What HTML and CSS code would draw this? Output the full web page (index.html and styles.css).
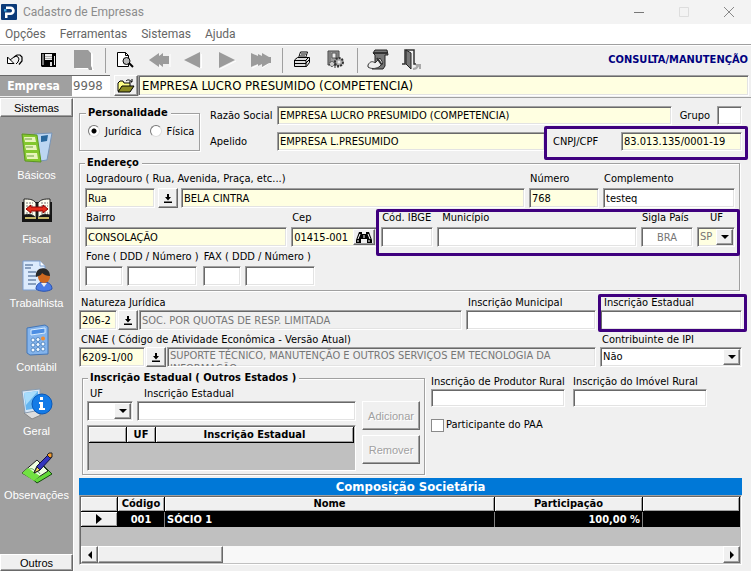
FILE: index.html
```html
<!DOCTYPE html>
<html lang="pt-BR">
<head>
<meta charset="utf-8">
<title>Cadastro de Empresas</title>
<link rel="stylesheet" href="styles.css">
</head>
<body>
<svg class="defs" aria-hidden="true">
  <symbol id="drop" viewBox="0 0 8 4"><path d="M0 0h8L4 4z"/></symbol>
  <symbol id="pick" viewBox="0 0 8 9"><path d="M3 0h2v3h2L4 6.500 1 3h2zM0 7.500h8V9H0z"/></symbol>
</svg>
<div class="window">
  <header class="titlebar">
    <svg class="logo" viewBox="0 0 16 16"><rect width="16" height="16" rx="1" fill="#0b3a78"/><path d="M5 2.500h4.500a4.250 4.250 0 0 1 0 8.500H6.500v3H4V8.500h5.300a1.700 1.700 0 0 0 0-3.500H5z" fill="#fff"/><path d="M3 5h2.500v2.500H3z" fill="#3da5e0"/></svg>
    <h1>Cadastro de Empresas</h1>
    <div class="window-buttons">
      <button aria-label="Minimizar"><svg viewBox="0 0 12 12"><path d="M1 6.500h10" stroke="#777"/></svg></button>
      <button aria-label="Maximizar" disabled><svg viewBox="0 0 12 12"><path d="M1.500 1.500h9v9h-9z" stroke="#ddd"/></svg></button>
      <button aria-label="Fechar"><svg viewBox="0 0 12 12"><path d="M1 1l10 10M11 1L1 11" stroke="#888"/></svg></button>
    </div>
  </header>
  <nav class="menubar">
    <a href="#">Opções</a><a href="#">Ferramentas</a><a href="#">Sistemas</a><a href="#">Ajuda</a>
  </nav>
  <div class="toolbar">
    <button aria-label="Desfazer"><svg viewBox="0 0 22 22"><path d="M1.500 8v6.500H8z" fill="#fff" stroke="#000"/><path d="M4 11l4-3 2-1 2 1 1 2-1 3-2 2" fill="none" stroke="#000"/><path d="M8 8l3-2h3l2 2v4l-3 3.500" fill="none" stroke="#000" stroke-width="1.200"/></svg></button>
    <button aria-label="Salvar"><svg viewBox="0 0 22 22"><path d="M1 4h15v14H2l-1-1z" fill="#000"/><path d="M2.500 5h1v11h-1zM5 5h7v6H5zM14 7h1v9h-1z" fill="#eee"/><path d="M5 7.500h7M5 9.500h7" stroke="#aaa"/><path d="M10 13h2v4h-2z" fill="#ddd"/></svg></button>
    <button aria-label="Novo" disabled><svg viewBox="0 0 22 22"><path d="M2 2h14l3 3v15h1v1h-4l-1-1H2z" fill="#fff"/><path d="M0 1h14l3 3v13l1 2v2h-3l-1-2H0z" fill="#9b9b9b"/></svg></button>
    <i class="separator"></i>
    <button aria-label="Pesquisar"><svg viewBox="0 0 22 22"><path d="M2.500 3.500h8l3 3v11h-11z" fill="#fff" stroke="#000"/><path d="M10.500 3.500v3h3" fill="none" stroke="#000"/><circle cx="11.500" cy="12" r="3.500" fill="#bbb" stroke="#000"/><path d="M14 14l4 4" stroke="#000" stroke-width="2"/></svg></button>
    <button aria-label="Primeiro" disabled><svg viewBox="0 0 22 22"><path d="M11 5v14M21 5v13" stroke="#fff"/><path d="M0 11l10-7v3l4-3v3h6v8h-6v3l-4-3v3z" fill="#9b9b9b"/></svg></button>
    <button aria-label="Anterior" disabled><svg viewBox="0 0 22 22"><path d="M18.500 5v14l-3-1" stroke="#fff" fill="none"/><path d="M1 11l16-8v16z" fill="#9b9b9b"/></svg></button>
    <button aria-label="Próximo" disabled><svg viewBox="0 0 22 22"><path d="M3 20l16-8" stroke="#fff"/><path d="M18 11L2 3v16z" fill="#9b9b9b"/></svg></button>
    <button aria-label="Último" disabled><svg viewBox="0 0 22 22"><path d="M1 19l8-4M11 19l6-4" stroke="#fff"/><path d="M20 8v6h-2l-7 4v-3l-4 2v-2l-7 3V4l7 3V5l4 2V4l7 4z" fill="#9b9b9b"/></svg></button>
    <i class="separator"></i>
    <button aria-label="Imprimir"><svg viewBox="0 0 22 22"><path d="M6.500 9l2-6h7l-2 6z" fill="#fff" stroke="#000"/><path d="M9 5h5M8 7h5" stroke="#000"/><path d="M2.500 11l3-2.500h12v5l-3 4h-12z" fill="#ddd" stroke="#000"/><path d="M2 11.500h12v6M2 14.500h12M14 11l3-3M14 14l3-3" stroke="#000" fill="none"/></svg></button>
    <button aria-label="Configurar"><svg viewBox="0 0 22 22"><path d="M2 2h11v14H2z" fill="#999" stroke="#444"/><path d="M6 4h4v5H6z" fill="#eee" stroke="#555"/><path d="M11 3v9M4 3v12" stroke="#666"/><circle cx="13" cy="13" r="4" fill="#aaa" stroke="#333" stroke-width="2" stroke-dasharray="2 1"/><circle cx="6" cy="15" r="2.500" fill="#ccc" stroke="#333" stroke-dasharray="2 1"/><path d="M9 12v7M12 16v3" stroke="#333"/><circle cx="13" cy="13" r="1.500" fill="#eee"/></svg></button>
    <i class="separator"></i>
    <button aria-label="Relatórios"><svg viewBox="0 0 22 22"><path d="M6 4l2-3h12l1 5h-3v11l-2 3H5l3-3V6z" fill="#777" stroke="#222"/><path d="M7 4h13" stroke="#333" stroke-width="2"/><path d="M1 16c2-4 5-4 7-2l5-5 3 5-4 4c-4 2-8 2-11 0z" fill="#eee" stroke="#333"/><path d="M10 9l5 7" stroke="#333" stroke-width="2"/></svg></button>
    <button aria-label="Sair"><svg viewBox="0 0 22 22"><path d="M1 15h3V1h9v14h2" fill="none" stroke="#333" stroke-width="1.500"/><path d="M5 1l5 3v16l-5-5z" fill="#777" stroke="#222"/><path d="M12 20c3 0 4-1 5-3l-2-1h4v4" fill="none" stroke="#aaa" stroke-width="2"/></svg></button>
    <strong class="mode">CONSULTA/MANUTENÇÃO</strong>
  </div>
  <div class="company">
    <label for="empresa">Empresa</label>
    <input id="empresa" class="code" value="9998">
    <button class="raised" aria-label="Abrir empresa"><svg viewBox="0 0 18 14"><path d="M1 12V4l2-2h3l1 2h6v8z" fill="#ff8" stroke="#000"/><path d="M1 13l4-6h12l-4 6z" fill="#8a8a22" stroke="#000"/><path d="M9 2c2-2 4-1 6 1m0-3v3h-3" fill="none" stroke="#000"/></svg></button>
    <input class="field yellow name" aria-label="Nome da empresa" value="EMPRESA LUCRO PRESUMIDO (COMPETENCIA)">
  </div>
  <div class="body">
    <aside class="sidebar">
      <button class="raised tab">Sistemas</button>
      <nav>
        <a href="#"><svg viewBox="0 0 32 32"><path d="M13 2l18-1-5 27-14 2z" fill="#bcd6f2" stroke="#7794b8"/><path d="M20 4l7-1-1 6-6 1z" fill="#27679d"/><path d="M1 2l15 1 4 27-16-1z" fill="#83c72d" stroke="#5d9621"/><path d="M3 5h11l1 5H4zM4 13h11l1 5H5zM5 21h11l1 6H6z" fill="#e8f5ba"/><path d="M4 7h7M5 15h7M6 24h7" stroke="#6f9a48"/></svg>Básicos</a>
        <a href="#"><svg viewBox="0 0 32 32"><path d="M1 6h30v20H1z" fill="#151515"/><path d="M3 3c5 0 9 0 12 4v15c-3-4-7-4-12-3zM29 3c-5 0-9 0-12 4v15c3-4 7-4 12-3z" fill="#fffff0" stroke="#222"/><path d="M4 22h11M17 22h11" stroke="#c6b868" stroke-width="2"/><path d="M5 7h7M5 10h7M20 7h7M20 10h7M5 17h7M20 17h7" stroke="#777" stroke-dasharray="2 1"/><path d="M5 13l5-4v2h12V9l5 4-5 4v-2H10v2z" fill="#e62d1b" stroke="#8b0000"/></svg>Fiscal</a>
        <a href="#"><svg viewBox="0 0 32 32"><path d="M2 1h17l5 5v24H2z" fill="#dcebfd" stroke="#7d9fd0"/><path d="M19 1v5h5" fill="#fff" stroke="#7d9fd0"/><path d="M4 5h8M4 8h6M7 12h8M7 16h8M7 20h8M7 24h8" stroke="#345581"/><path d="M15 29c0-5 4-7 8-7s8 2 8 7c-4 3-12 3-16 0z" fill="#4b7ce5" stroke="#2851b0"/><circle cx="23" cy="17" r="6" fill="#cf681f"/><path d="M15 17c-2-11 14-12 14-1-3 0-6-1-8-3-1 3-4 3-6 4z" fill="#292929"/><path d="M20 23l3 4 3-4" fill="#eee"/></svg>Trabalhista</a>
        <a href="#"><svg viewBox="0 0 32 32"><path d="M6 4l18-3 3 2v27L9 31l-3-2z" fill="#84b4ec" stroke="#4376b7"/><path d="M10 6l14-2v5l-14 2z" fill="#4d8ee3" stroke="#d9edff"/><g fill="#f4faff" stroke="#5489c4"><circle cx="12" cy="16" r="2"/><circle cx="17" cy="15.500" r="2"/><circle cx="12" cy="21" r="2"/><circle cx="17" cy="20.500" r="2"/><circle cx="22" cy="20" r="2"/><circle cx="12" cy="26" r="2"/><circle cx="17" cy="25.500" r="2"/><circle cx="22" cy="25" r="2"/></g><circle cx="22" cy="14.500" r="2" fill="#f08b30"/></svg>Contábil</a>
        <a href="#"><svg viewBox="0 0 32 32"><path d="M3 25l9-3 8 5-9 4z" fill="#ddd" stroke="#888"/><path d="M1 3l18-2v21L4 25z" fill="#d6e6f7" stroke="#899cb0"/><path d="M3 5l14-2v17L5 22z" fill="#63b4f0"/><path d="M3 5l14-2-12 14z" fill="#a7dcfc"/><circle cx="21" cy="16" r="10" fill="#147be7" stroke="#0758bb"/><path d="M19 14h3v6h2v2h-6v-2h1v-4h-1v-2zM19 9h3v3h-3z" fill="#fff"/></svg>Geral</a>
        <a href="#"><svg viewBox="0 0 32 32"><path d="M7 23l15-10 9 9-15 9z" fill="#62d838" stroke="#174b10"/><path d="M1 21L16 8l11 11-14 9z" fill="#efffe0" stroke="#222"/><path d="M5 20c3-4 6-4 8-2s5 1 6 4" fill="none" stroke="#50a050"/><path d="M1 21l6-5 12 8-6 5z" fill="#71e142"/><path d="M13 21l3-7L28 2l3 3-12 13z" fill="#3436bd" stroke="#101045"/><path d="M13 21l3-6 3 3z" fill="#f4d85a" stroke="#222"/><path d="M26 3l2-2h3v4l-2 1z" fill="#f39b2d" stroke="#222"/></svg>Observações</a>
      </nav>
      <button class="raised tab">Outros</button>
    </aside>
    <main>
      <div class="identity">
        <fieldset class="kind">
          <legend>Personalidade</legend>
          <label><input type="radio" name="tipo" checked>Jurídica</label>
          <label><input type="radio" name="tipo">Física</label>
        </fieldset>
        <div class="names">
          <div class="line">
            <label class="lead" for="razao">Razão Social</label>
            <input id="razao" class="field yellow grow" value="EMPRESA LUCRO PRESUMIDO (COMPETENCIA)">
            <label class="group-label" for="grupo">Grupo</label>
            <input id="grupo" class="field group">
          </div>
          <div class="line">
            <label class="lead" for="apelido">Apelido</label>
            <input id="apelido" class="field yellow grow" value="EMPRESA L.PRESUMIDO">
            <div class="line tax marked">
              <label for="cnpj">CNPJ/CPF</label>
              <input id="cnpj" class="field yellow grow" value="83.013.135/0001-19">
            </div>
          </div>
        </div>
      </div>

      <fieldset class="address">
        <legend>Endereço</legend>
        <div class="row">
          <div class="cell grow">
            <label for="tipo-log">Logradouro ( Rua, Avenida, Praça, etc...)</label>
            <div class="line street">
              <input id="tipo-log" class="field yellow w70" value="Rua">
              <button class="raised pick" aria-label="Escolher logradouro"><svg><use href="#pick"/></svg></button>
              <input class="field yellow grow" aria-label="Logradouro" value="BELA CINTRA">
            </div>
          </div>
          <div class="cell w70"><label for="numero">Número</label><input id="numero" class="field yellow" value="768"></div>
          <div class="cell w132"><label for="compl">Complemento</label><input id="compl" class="field" value="testeq"></div>
        </div>
        <div class="row">
          <div class="cell grow"><label for="bairro">Bairro</label><input id="bairro" class="field yellow" value="CONSOLAÇÃO"></div>
          <div class="cell w86"><label for="cep">Cep</label>
            <div class="combo"><input id="cep" class="field yellow" value="01415-001"><button class="raised find" aria-label="Buscar CEP"><svg viewBox="0 0 16 12"><path d="M3 1h3v2h4V1h3l3 8v3h-5V8H5v4H0V9z"/><path d="M4 3L2 8M12 3l2 5M8 4v3M2 9v2M13 9v2" stroke="#fff"/></svg></button></div>
          </div>
          <div class="row city grow marked">
            <div class="cell w52"><label for="ibge">Cód. IBGE</label><input id="ibge" class="field"></div>
            <div class="cell grow"><label class="indent" for="municipio">Município</label><input id="municipio" class="field"></div>
            <div class="cell w52"><label for="pais">Sigla País</label><input id="pais" class="field center" value="BRA" disabled></div>
            <div class="cell w38"><label class="center" for="uf">UF</label>
              <div class="combo"><select id="uf" class="field yellow" disabled><option>SP</option></select><span class="raised arrow"><svg><use href="#drop"/></svg></span></div>
            </div>
          </div>
        </div>
        <div class="row">
          <div class="cell"><label for="ddd">Fone ( DDD / Número )</label><div class="line phone"><input id="ddd" class="field w38"><input class="field w70" aria-label="Número do telefone"></div></div>
          <div class="cell"><label for="fax">FAX ( DDD / Número )</label><div class="line phone"><input id="fax" class="field w38"><input class="field w70" aria-label="Número do fax"></div></div>
        </div>
      </fieldset>

      <div class="registry">
        <div class="cell"><label for="natureza">Natureza Jurídica</label>
          <div class="line"><input id="natureza" class="field yellow w38" value="206-2"><button class="raised pick" aria-label="Escolher natureza"><svg><use href="#pick"/></svg></button><input class="field grow" aria-label="Descrição da natureza" value="SOC. POR QUOTAS DE RESP. LIMITADA" disabled></div>
        </div>
        <div class="cell"><label for="insc-mun">Inscrição Municipal</label><input id="insc-mun" class="field"></div>
        <div class="cell marked state"><label for="insc-est">Inscrição Estadual</label><input id="insc-est" class="field"></div>
        <div class="cell wide"><label for="cnae">CNAE ( Código de Atividade Econômica - Versão Atual)</label>
          <div class="line"><input id="cnae" class="field yellow w66" value="6209-1/00"><button class="raised pick" aria-label="Escolher CNAE"><svg><use href="#pick"/></svg></button><textarea class="field grow" aria-label="Descrição do CNAE" disabled>SUPORTE TÉCNICO, MANUTENÇÃO E OUTROS SERVIÇOS EM TECNOLOGIA DA INFORMAÇÃO</textarea></div>
        </div>
        <div class="cell"><label for="ipi">Contribuinte de IPI</label>
          <div class="combo"><select id="ipi" class="field"><option>Não</option><option>Sim</option></select><span class="raised arrow"><svg><use href="#drop"/></svg></span></div>
        </div>
      </div>

      <div class="extras">
        <fieldset class="others">
          <legend>Inscrição Estadual ( Outros Estados )</legend>
          <div class="others-form">
            <div class="row">
              <div class="cell w46"><label for="uf2">UF</label><div class="combo"><select id="uf2" class="field"><option></option><option>SP</option></select><span class="raised arrow"><svg><use href="#drop"/></svg></span></div></div>
              <div class="cell grow"><label class="indent" for="insc2">Inscrição Estadual</label><input id="insc2" class="field"></div>
            </div>
            <div class="grid small">
              <table><colgroup><col class="c38"><col class="c28"><col></colgroup><thead><tr><th></th><th>UF</th><th>Inscrição Estadual</th></tr></thead></table>
            </div>
          </div>
          <div class="actions"><button class="raised" disabled>Adicionar</button><button class="raised" disabled>Remover</button></div>
        </fieldset>
        <div class="rural">
          <div class="row">
            <div class="cell w134"><label for="produtor">Inscrição de Produtor Rural</label><input id="produtor" class="field"></div>
            <div class="cell w134"><label for="imovel">Inscrição do Imóvel Rural</label><input id="imovel" class="field"></div>
          </div>
          <label class="check"><input type="checkbox">Participante do PAA</label>
        </div>
      </div>

      <section class="partners">
        <h2>Composição Societária</h2>
        <div class="grid">
          <table>
            <colgroup><col class="c36"><col class="c47"><col><col class="c148"><col class="c96"></colgroup>
            <thead><tr><th></th><th>Código</th><th>Nome</th><th>Participação</th><th></th></tr></thead>
            <tbody><tr><th><svg class="marker" viewBox="0 0 6 10"><path d="M0 0l6 5-6 5z"/></svg></th><td class="center">001</td><td>SÓCIO 1</td><td class="number">100,00 %</td><td></td></tr></tbody>
          </table>
          <div class="scroll"><button class="raised" aria-label="Rolar à esquerda"><svg viewBox="0 0 4 8"><path d="M4 0v8L0 4z"/></svg></button><span class="raised thumb"></span><button class="raised" aria-label="Rolar à direita"><svg viewBox="0 0 4 8"><path d="M0 0v8l4-4z"/></svg></button></div>
        </div>
      </section>
    </main>
  </div>
</div>
</body>
</html>
```
FILE: styles.css
```css
* { box-sizing: border-box; }
body {
  margin: 0;
  background: #f0f0f0;
  color: #000;
  font: 11px/14px "DejaVu Sans Condensed", "Noto Sans", sans-serif;
}
button, input, select, textarea { margin: 0; padding: 0; font: inherit; color: inherit; border-radius: 0; }
button { background: none; border: 0; display: flex; align-items: center; justify-content: center; }
a { color: inherit; text-decoration: none; }
svg { display: block; fill: none; }
.defs { position: absolute; width: 0; height: 0; }
.window { min-height: 100vh; display: flex; flex-direction: column; }

.titlebar { display: flex; align-items: center; height: 24px; gap: 6px; padding-left: 1px; background: #f3f3f3; }
.logo { width: 16px; height: 16px; }
h1 { margin: 0; font: 12px/16px Roboto, sans-serif; color: #8c8c8c; }
.window-buttons { display: flex; margin-left: auto; }
.window-buttons button { width: 45px; height: 24px; }
.window-buttons svg { width: 12px; height: 12px; }
.menubar { display: flex; gap: 14px; height: 20px; padding-left: 5px; background: #fff; color: #666; font: 12px/20px Roboto, sans-serif; }

.toolbar { display: flex; align-items: center; height: 31px; border-top: 1px solid #a0a0a0; box-shadow: inset 0 1px #fff; }
.toolbar button { width: 34px; height: 28px; }
.toolbar svg { width: 22px; height: 22px; }
.separator { width: 7px; height: 25px; border-left: 3px solid #f0f0f0; border-right: 3px solid #f0f0f0; background: #a0a0a0; }
.mode { margin-left: auto; padding-right: 3px; color: #000080; }

.company { display: flex; height: 23px; padding: 0 2px 1px 0; border-bottom: 1px solid #a0a0a0; }
.company label { width: 72px; padding-top: 1px; padding-right: 5px; border-top: 1px solid #696969; background: #a0a0a0; color: #fff; font-size: 12px; font-weight: bold; line-height: 18px; text-align: center; }
.company .code { width: 38px; padding-left: 1px; border: 0; border-top: 1px solid #696969; background: #fff; color: #666; font-size: 13px; }
.company button { width: 24px; margin-left: 4px; }
.company button svg { width: 18px; height: 14px; }
.company .name { flex: 1; height: auto; padding: 0 3px; font-size: 13px; }

.field {
  width: 100%;
  min-width: 0;
  height: 20px;
  padding: 0 2px;
  background: #fff;
  border: 1px solid;
  border-color: #a0a0a0 #fff #fff #a0a0a0;
  box-shadow: inset 1px 1px #696969, inset -1px -1px #e3e3e3;
}
.field:disabled { color: #767676; opacity: 1; background: #f0f0f0; }
.field.center:disabled { background: #fff; }
.field.yellow, .field.yellow:disabled { background: #ffffe1; }
select.field { appearance: none; }
textarea.field { padding: 1px 2px 0; resize: none; overflow: hidden; line-height: 13px; display: block; }
.raised {
  background: #f0f0f0;
  border: 1px solid;
  border-color: #fff #696969 #696969 #fff;
  box-shadow: inset -1px -1px #a0a0a0;
}
.combo { position: relative; }
.combo .arrow, .combo .find { position: absolute; top: 2px; right: 2px; bottom: 2px; width: 17px; display: flex; align-items: center; justify-content: center; pointer-events: none; }
.combo .find { width: 22px; pointer-events: auto; }
.find svg { width: 16px; height: 12px; fill: #000; }
.arrow svg { width: 8px; height: 4px; fill: #000; }
.pick { flex: none; width: 20px; height: 20px; }
.pick svg { width: 8px; height: 9px; fill: #000; }

.body { flex: 1; display: flex; }
.sidebar { flex: none; width: 74px; display: flex; flex-direction: column; border-right: 1px solid #fff; background: #a0a0a0; font: 11px/14px "Liberation Sans", sans-serif; color: #fff; }
.tab { height: 19px; color: #000; }
.tab:last-child { height: 17px; }
.sidebar nav { flex: 1; display: flex; flex-direction: column; gap: 14px; padding-top: 15px; }
.sidebar a { display: flex; flex-direction: column; align-items: center; gap: 4px; }
.sidebar svg { width: 32px; height: 32px; }

main { flex: 1; min-width: 0; padding: 8px 9px 4px 5px; }
fieldset { min-width: 0; margin: 0; border: 1px solid #a0a0a0; box-shadow: 1px 1px #fff, inset 1px 1px #fff; }
legend { padding: 0 3px 0 2px; background: #f0f0f0; font-weight: bold; line-height: 14px; }
.line, .row { display: flex; }
.line { align-items: center; }
.row { gap: 4px; }
.cell { min-width: 0; }
.cell > label { display: block; white-space: nowrap; }
.grow { flex: 1; min-width: 0; }
.center { text-align: center; }
.w38 { flex: none; width: 38px; }
.w46 { flex: none; width: 46px; }
.w52 { flex: none; width: 52px; }
.w66 { flex: none; width: 66px; }
.w70 { flex: none; width: 70px; }
.w86 { flex: none; width: 86px; }
.w132 { flex: none; width: 132px; }
.w134 { flex: none; width: 134px; }

.marked { position: relative; }
.marked::after { content: ""; position: absolute; inset: -6px -6px -9px -9px; border: 3px solid #3f007f; border-radius: 2px; pointer-events: none; }
.city.marked::after { inset: 0 -5px -9px -5px; }
.state.marked::after { inset: -2px -5px -2px -2px; }

.identity { display: flex; gap: 10px; }
.kind { align-self: flex-end; display: flex; gap: 8px; width: 121px; height: 45px; padding: 5px 0 0 8px; }
.kind legend { margin-left: -2px; }
.kind label { display: flex; align-items: flex-start; gap: 5px; white-space: nowrap; }
input[type="radio"] { appearance: none; width: 12px; height: 12px; border: 1px solid; border-color: #777 #ddd #ddd #777; border-radius: 50%; background: #fff; }
input[type="radio"]:checked { background: radial-gradient(circle, #000 2px, #fff 3px); }
.names { flex: 1; display: flex; flex-direction: column; gap: 7px; }
.names .field { height: 19px; }
.lead { width: 67px; }
.group-label { padding: 0 7px 0 8px; }
.names .group { width: 25px; }
.names .tax { width: 197px; padding-left: 8px; }
.tax label { width: 68px; }
.names .tax.marked::after { inset: -6px -6px -9px -1px; }

.address { display: flex; flex-direction: column; gap: 1px; margin: 5px 2px 0 0; padding: 0 4px 4px 5px; }
.address .cell > label { padding-left: 1px; line-height: 18px; }
.address .cell > .indent { padding-left: 5px; }
.address .street .pick { margin: 0 3px; }
.city { flex: 1.750; }
.phone { gap: 4px; }

.registry { display: grid; grid-template-columns: minmax(0, 1fr) 130px 142px; gap: 3px 4px; margin-top: 5px; }
.registry .cell > label { padding-left: 2px; }
.registry .state > label { padding-left: 4px; }
.registry .line { gap: 1px; }
.registry .wide { grid-column: span 2; }
.state .field { border-color: #a0a0a0 #fff #fff; }

.extras { display: flex; gap: 6px; margin-top: 4px; padding-left: 3px; }
.others { flex: none; display: flex; gap: 6px; width: 343px; padding: 2px 4px 3px 4px; }
.others legend { margin-left: 1px; }
.others-form { flex: 1; display: flex; flex-direction: column; gap: 4px; }
.others .cell > label { padding-left: 3px; }
.others .cell .indent { padding-left: 7px; }
.actions { display: flex; flex-direction: column; gap: 5px; padding-top: 14px; }
.actions button { width: 58px; height: 29px; color: #a0a0a0; text-shadow: 1px 1px #fff; font-family: "Liberation Sans", sans-serif; font-size: 11px; }
.rural { padding-top: 4px; }
.rural .row { gap: 8px; }
.rural .field { height: 18px; }
.check { display: flex; align-items: center; gap: 2px; margin-top: 11px; }
input[type="checkbox"] { appearance: none; width: 13px; height: 13px; border: 1px solid #8a8a8a; background: #fff; }

.grid { padding: 1px; background: #c0c0c0; border: 1px solid; border-color: #a0a0a0 #fff #fff #a0a0a0; box-shadow: inset 1px 1px #696969; }
.grid.small { height: 46px; }
table { width: 100%; table-layout: fixed; border-collapse: separate; border-spacing: 0; font-weight: bold; }
th { height: 16px; padding: 0; background: #f0f0f0; border-right: 1px solid #000; border-bottom: 1px solid #000; box-shadow: inset 1px 1px #fff, inset -1px -1px #a0a0a0; line-height: 14px; }
td { height: 16px; padding: 0 2px; background: #000; color: #fff; border-right: 1px solid #808080; line-height: 14px; }
td:last-child { border-right: 0; }
.partners th, .partners td { height: 15px; }
.number { text-align: right; }
.c28 { width: 29px; }
.c36 { width: 37px; }
.c38 { width: 38px; }
.c47 { width: 47px; }
.c96 { width: 97px; }
.c148 { width: 148px; }
.marker { width: 6px; height: 10px; margin: auto; fill: #000; }
.partners { margin-top: 3px; }
h2 { margin: 0; background: #0078d7; color: #fff; font-size: 13px; line-height: 17px; text-align: center; }
.scroll { display: flex; height: 17px; margin-top: 19px; background: #f8f8f8; }
.scroll button { flex: none; width: 17px; }
.scroll button:last-child { margin-left: auto; }
.scroll svg { width: 4px; height: 8px; fill: #000; }
.thumb { width: 19%; }
```
